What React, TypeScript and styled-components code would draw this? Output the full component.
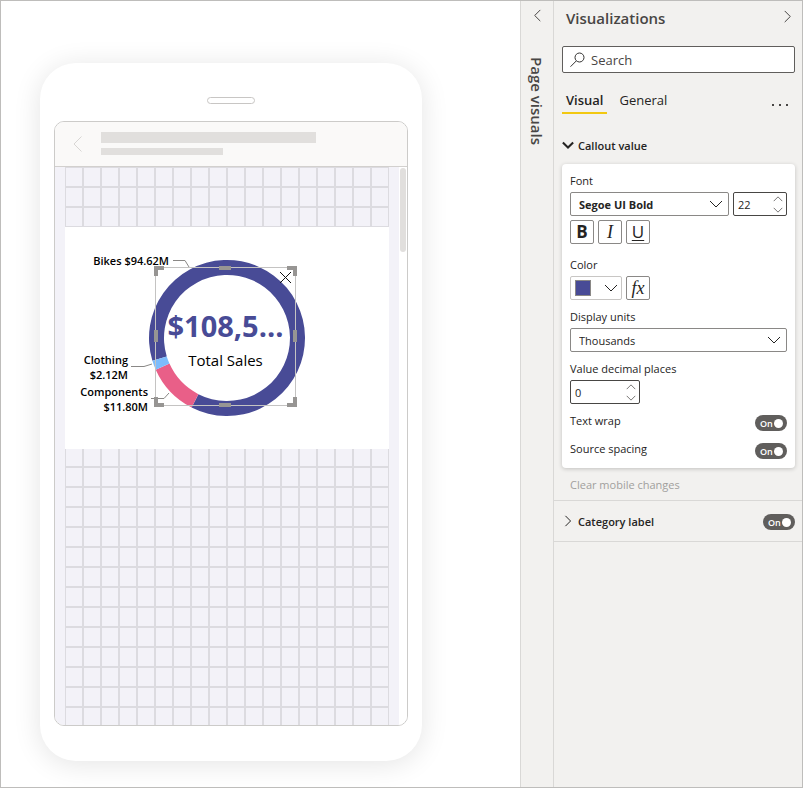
import React, { useId, useState } from "react";
import styled, { createGlobalStyle, css } from "styled-components";

const GlobalStyle = createGlobalStyle`
  *, *::before, *::after { box-sizing: border-box; }
  body { margin: 0; background: #fff; }
  body, button, input, select {
    font-family: "Open Sans", "Noto Sans", sans-serif;
    font-size: 11px;
    color: #252423;
  }
  button { padding: 0; border: 0; background: none; cursor: pointer; }
`;

const ink = "#252423";
const brand = "#484b96";
const line = "#d9d8d6";
const panelBg = "#f2f1ef";

/* ---------- Page ---------- */

const Page = styled.div`
  display: grid;
  grid-template-columns: minmax(420px, 1fr) 33px 249px;
  min-height: 100vh;
  border: 1px solid #bebdbb;
`;

const Canvas = styled.main`
  display: flex;
  flex-direction: column;
  padding: 62px 39px 26px;
  overflow: hidden;
`;

/* ---------- Phone ---------- */

const Phone = styled.section`
  flex: 1;
  display: flex;
  flex-direction: column;
  width: 100%;
  max-width: 382px;
  padding: 34px 14px 35px;
  border-radius: 36px;
  background: #fff;
  box-shadow: 0 3px 28px rgba(0, 0, 0, 0.11);
`;

const Speaker = styled.div`
  align-self: center;
  width: 48px;
  height: 7px;
  margin-bottom: 17px;
  border: 1px solid #c8c6c4;
  border-radius: 4px;
`;

const Screen = styled.div`
  flex: 1;
  display: flex;
  flex-direction: column;
  border: 1px solid #cccbc9;
  border-radius: 10px;
  overflow: hidden;
`;

const AppBar = styled.div`
  display: flex;
  align-items: flex-start;
  height: 45px;
  padding: 10px 18px;
  gap: 19px;
  background: #faf9f8;
  border-bottom: 1px solid #d2d0ce;
`;

const BackIcon = styled.svg`
  width: 9px;
  height: 16px;
  margin-top: 4px;
`;

const TitleBars = styled.div`
  display: flex;
  flex-direction: column;
  gap: 5px;
`;

const Bar = styled.div<{ $w: number; $h: number }>`
  width: ${(p) => p.$w}px;
  height: ${(p) => p.$h}px;
  background: #e1dfdd;
`;

const ScreenBody = styled.div`
  flex: 1;
  display: flex;
`;

const GridArea = styled.div`
  flex: 1;
  padding: 0 10px;
  background: #f3f2f8;
`;

const SnapGrid = styled.div`
  height: 100%;
  padding-top: 60px;
  background-image:
    linear-gradient(to right, #dcdbe0 1px, transparent 1px 17px, #dcdbe0 17px),
    linear-gradient(to bottom, #dcdbe0 1px, transparent 1px 19px, #dcdbe0 19px);
  background-size: 18px 20px;
`;

const ScrollTrack = styled.div`
  width: 8px;
  padding: 1px;
  background: #fff;
`;

const ScrollThumb = styled.div`
  height: 84px;
  border-radius: 3px;
  background: #e1dfdd;
`;

/* ---------- Chart ---------- */

const ChartTile = styled.div`
  position: relative;
  height: 222px;
  background: #fff;
`;

const ChartSvg = styled.svg`
  display: block;
  width: 324px;
  height: 222px;
  font-size: 11px;
  font-weight: 600;
`;

const Callout = styled.div`
  position: absolute;
  left: 90px;
  top: 40px;
  width: 141px;
  height: 139px;
  padding-top: 38px;
  border: 1px solid #c4c3c2;
  text-align: center;
  white-space: nowrap;
`;

const CalloutValue = styled.div`
  color: ${brand};
  font-size: 29px;
  font-weight: 700;
  line-height: 40px;
`;

const CalloutLabel = styled.div`
  color: #000;
  font-size: 15px;
  font-weight: 500;
  line-height: 28px;
`;

const HandleLayer = styled.svg`
  position: absolute;
  inset: -2px;
  width: 143px;
  height: 141px;
`;

const RemoveButton = styled.button`
  position: absolute;
  top: 3px;
  right: 3px;
  width: 13px;
  height: 13px;
  svg { display: block; }
`;

const CX = 162;
const CY = 111;
const point = (deg: number, r: number) => {
  const a = (deg * Math.PI) / 180;
  return `${(CX + r * Math.sin(a)).toFixed(2)} ${(CY - r * Math.cos(a)).toFixed(2)}`;
};
const ring = (from: number, to: number, outer = 78, inner = 63) => {
  const large = to - from > 180 ? 1 : 0;
  return `M${point(from, outer)} A${outer} ${outer} 0 ${large} 1 ${point(to, outer)} L${point(to, inner)} A${inner} ${inner} 0 ${large} 0 ${point(from, inner)} Z`;
};

const slices = [
  { name: "Bikes", from: 253, to: 567, color: brand },
  { name: "Components", from: 207, to: 246, color: "#e95f88" },
  { name: "Clothing", from: 246, to: 253, color: "#7dbcfc" },
];

function DonutChart() {
  return (
    <ChartSvg viewBox="0 0 324 222" role="img" aria-label="Total sales by category">
      {slices.map((s) => (
        <path key={s.name} d={ring(s.from, s.to)} fill={s.color} />
      ))}
      <g fill="none" stroke="#8a8886">
        <path d="M108 33.500H120L124 40" />
        <path d="M66 139.500H79L87 137" />
        <path d="M86 171.500H99L104 166" />
      </g>
      <g textAnchor="end" fill="#000">
        <text x="104" y="38">Bikes $94.62M</text>
        <text x="63" y="137">Clothing</text>
        <text x="63" y="152">$2.12M</text>
        <text x="83" y="169">Components</text>
        <text x="83" y="184">$11.80M</text>
      </g>
    </ChartSvg>
  );
}

function SelectedCallout() {
  return (
    <Callout>
      <CalloutValue>$108,5...</CalloutValue>
      <CalloutLabel>Total Sales</CalloutLabel>
      <HandleLayer viewBox="0 0 143 141" fill="#979593" aria-hidden>
        <path d="M0 0h10v4H4v6H0z" />
        <path d="M143 0h-10v4h6v6h4z" />
        <path d="M0 141h10v-4H4v-6H0z" />
        <path d="M143 141h-10v-4h6v-6h4z" />
        <path d="M65 0h12v4H65zM65 137h12v4H65zM0 64h4v12H0zM139 64h4v12h-4z" />
      </HandleLayer>
      <RemoveButton type="button" aria-label="Remove visual">
        <svg width="13" height="13" viewBox="0 0 13 13" stroke="#111" fill="none">
          <path d="M1 1l11 11M12 1L1 12" />
        </svg>
      </RemoveButton>
    </Callout>
  );
}

/* ---------- Collapsed rail ---------- */

const Rail = styled.aside`
  display: flex;
  flex-direction: column;
  align-items: center;
  border-left: 1px solid ${line};
  background: ${panelBg};
`;

const RailButton = styled.button`
  width: 24px;
  height: 32px;
`;

const RailTitle = styled.h2`
  margin: 24px 0 0;
  font-size: 15px;
  font-weight: 600;
  line-height: 24px;
  writing-mode: vertical-rl;
  color: #484644;
`;

/* ---------- Visualizations pane ---------- */

const Pane = styled.aside`
  border-left: 1px solid ${line};
  background: ${panelBg};
`;

const PaneSection = styled.section`
  padding: 0 7px 0 8px;
`;

const PaneHeader = styled.header`
  display: flex;
  align-items: center;
  justify-content: space-between;
  height: 33px;
  padding: 0 1px 0 4px;
`;

const PaneTitle = styled.h2`
  margin: 0;
  font-size: 15px;
  font-weight: 600;
  color: #484644;
`;

const SearchBox = styled.label`
  display: flex;
  align-items: center;
  gap: 6px;
  height: 27px;
  margin-top: 12px;
  padding: 0 7px;
  border: 1px solid #605e5c;
  border-radius: 2px;
  background: #fff;
`;

const SearchInput = styled.input`
  flex: 1;
  min-width: 0;
  padding: 0;
  border: 0;
  outline: 0;
  background: none;
  font-size: 13px;
  &::placeholder { color: #484644; opacity: 1; }
`;

const Tabs = styled.div`
  display: flex;
  gap: 8px;
  height: 27px;
  margin: 14px 0 18px;
`;

const Tab = styled.button<{ $active?: boolean }>`
  padding: 0 4px;
  border-bottom: 2px solid ${(p) => (p.$active ? "#f2c811" : "transparent")};
  font-size: 13px;
  font-weight: ${(p) => (p.$active ? 600 : 400)};
`;

const MoreButton = styled.button`
  display: flex;
  align-items: flex-end;
  justify-content: center;
  width: 24px;
  margin-left: auto;
  padding-right: 1px;
  padding-bottom: 8px;
  margin-right: 3px;
`;

const SectionToggle = styled.button`
  display: flex;
  align-items: center;
  gap: 4px;
  height: 26px;
  font-weight: 600;
`;

const Card = styled.div`
  display: flex;
  flex-direction: column;
  gap: 8px;
  margin-top: 6px;
  padding: 8px;
  border-radius: 4px;
  background: #fff;
  box-shadow: 0 1px 4px rgba(0, 0, 0, 0.2);
`;

const FontGroup = styled.div`
  display: flex;
  flex-direction: column;
  gap: 4px;
  margin-bottom: 4px;
`;

const Field = styled.div`
  display: flex;
  flex-direction: column;
  gap: 2px;
`;

const Label = styled.label`
  line-height: 18px;
`;

const Controls = styled.div`
  display: flex;
  flex-wrap: wrap;
  gap: 4px;
`;

const controlFrame = css`
  height: 24px;
  border: 1px solid #8a8886;
  border-radius: 2px;
  background: #fff;
`;

const SelectFrame = styled.div`
  ${controlFrame}
  flex: 1;
  display: grid;
  grid-template-columns: 1fr 25px;
  align-items: center;
  > * { grid-row: 1; }
  > svg { grid-column: 2; justify-self: center; pointer-events: none; z-index: 1; }
`;

const Select = styled.select<{ $bold?: boolean }>`
  grid-column: 1 / -1;
  height: 22px;
  padding: 0 8px;
  border: 0;
  outline: 0;
  background: none;
  appearance: none;
  font-weight: ${(p) => (p.$bold ? 700 : 400)};
`;

const NumberFrame = styled.div<{ $w: number }>`
  ${controlFrame}
  display: flex;
  width: ${(p) => p.$w}px;
  border-color: #484644;
`;

const NumberInput = styled.input`
  flex: 1;
  min-width: 0;
  padding: 0 0 0 4px;
  border: 0;
  outline: 0;
  background: none;
  appearance: textfield;
  &::-webkit-inner-spin-button { display: none; }
`;

const Stepper = styled.div`
  display: flex;
  flex-direction: column;
  width: 16px;
  button { flex: 1; display: flex; align-items: center; justify-content: center; }
`;

const SquareButton = styled.button`
  ${controlFrame}
  display: flex;
  align-items: center;
  justify-content: center;
  width: 24px;
  font-size: 17px;
  line-height: 20px;
`;

const BoldGlyph = styled.b`
  font-weight: 700;
`;

const ItalicGlyph = styled.i`
  font-family: "Liberation Serif", serif;
  font-size: 18px;
`;

const UnderlineGlyph = styled.u`
  text-underline-offset: 2px;
`;

const ColorButton = styled.button`
  ${controlFrame}
  display: flex;
  align-items: center;
  justify-content: space-between;
  width: 52px;
  padding: 0 3px 0 4px;
  border-color: #c8c6c4;
`;

const Swatch = styled.span`
  width: 16px;
  height: 16px;
  border: 1px solid #8a8886;
  background: ${brand};
`;

const SwitchRow = styled.div`
  display: flex;
  justify-content: space-between;
  height: 20px;
`;

const SwitchBox = styled.label`
  position: relative;
  display: flex;
  align-items: center;
  justify-content: space-between;
  width: 32px;
  height: 16px;
  margin-top: 3px;
  padding: 0 4px 0 5px;
  border-radius: 8px;
  background: #605e5c;
  color: #fff;
  font-size: 9px;
  font-weight: 600;
  cursor: pointer;
`;

const SwitchInput = styled.input`
  position: absolute;
  inset: 0;
  margin: 0;
  opacity: 0;
`;

const Knob = styled.span`
  width: 9px;
  height: 9px;
  border-radius: 50%;
  background: #fff;
`;

const ClearButton = styled.button`
  display: block;
  height: 32px;
  padding: 0 8px;
  color: #a19f9d;
`;

const SectionRow = styled.div`
  display: flex;
  align-items: center;
  justify-content: space-between;
  padding: 0 7px 0 8px;
  height: 42px;
  border-top: 1px solid ${line};
  border-bottom: 1px solid ${line};
  ${SwitchBox} { margin-top: 2px; }
`;

const turns = { down: 0, left: 90, up: 180, right: 270 };

function Chevron({ dir, size = 14, color = ink, width = 1 }: {
  dir: keyof typeof turns;
  size?: number;
  color?: string;
  width?: number;
}) {
  return (
    <svg width={size} height={size} viewBox="0 0 14 14" fill="none" stroke={color} aria-hidden>
      <path
        d="M1 4l6 6 6-6"
        transform={`rotate(${turns[dir]} 7 7)`}
        strokeWidth={(width * 14) / size}
      />
    </svg>
  );
}

function NumberField({ id, label, initial, w }: { id: string; label?: string; initial: number; w: number }) {
  const [value, setValue] = useState(initial);
  return (
    <NumberFrame $w={w}>
      <NumberInput
        id={id}
        type="number"
        aria-label={label}
        value={value}
        onChange={(e) => setValue(Number(e.target.value))}
      />
      <Stepper>
        <button type="button" aria-label="Increase" onClick={() => setValue(value + 1)}>
          <Chevron dir="up" size={10} color="#797775" />
        </button>
        <button type="button" aria-label="Decrease" onClick={() => setValue(value - 1)}>
          <Chevron dir="down" size={10} color="#797775" />
        </button>
      </Stepper>
    </NumberFrame>
  );
}

function Switch({ id, label }: { id: string; label?: string }) {
  const [on, setOn] = useState(true);
  return (
    <SwitchBox>
      <SwitchInput
        id={id}
        type="checkbox"
        role="switch"
        aria-label={label}
        checked={on}
        onChange={(e) => setOn(e.target.checked)}
      />
      {on ? "On" : "Off"}
      <Knob />
    </SwitchBox>
  );
}

export default function App() {
  const uid = useId();
  const id = (name: string) => `${uid}-${name}`;
  return (
    <>
      <GlobalStyle />
      <Page>
        <Canvas>
          <Phone aria-label="Mobile layout">
            <Speaker />
            <Screen>
              <AppBar>
                <BackIcon viewBox="0 0 9 16" fill="none" stroke="#d8d6d4">
                  <path d="M8.500 0.500L1 8l7.500 7.500" />
                </BackIcon>
                <TitleBars>
                  <Bar $w={215} $h={11} />
                  <Bar $w={122} $h={7} />
                </TitleBars>
              </AppBar>
              <ScreenBody>
                <GridArea>
                  <SnapGrid>
                    <ChartTile>
                      <DonutChart />
                      <SelectedCallout />
                    </ChartTile>
                  </SnapGrid>
                </GridArea>
                <ScrollTrack>
                  <ScrollThumb />
                </ScrollTrack>
              </ScreenBody>
            </Screen>
          </Phone>
        </Canvas>

        <Rail>
          <RailButton type="button" aria-label="Expand page visuals">
            <Chevron dir="left" size={13} color="#484644" />
          </RailButton>
          <RailTitle>Page visuals</RailTitle>
        </Rail>

        <Pane>
          <PaneSection>
            <PaneHeader>
              <PaneTitle>Visualizations</PaneTitle>
              <button type="button" aria-label="Collapse visualizations">
                <Chevron dir="right" size={13} color="#484644" />
              </button>
            </PaneHeader>
            <SearchBox>
              <svg width="15" height="16" viewBox="0 0 15 16" fill="none" stroke="#323130" aria-hidden>
                <circle cx="9.500" cy="5.500" r="4.500" />
                <path d="M6.200 9L0.500 14.700" />
              </svg>
              <SearchInput type="search" placeholder="Search" aria-label="Search" />
            </SearchBox>
            <Tabs role="tablist">
              <Tab type="button" role="tab" aria-selected $active>Visual</Tab>
              <Tab type="button" role="tab" aria-selected={false}>General</Tab>
              <MoreButton type="button" aria-label="More options">
                <svg width="16" height="2" viewBox="0 0 16 2" fill="#484644">
                  <path d="M0 0h2v2H0zM7 0h2v2H7zM14 0h2v2h-2z" />
                </svg>
              </MoreButton>
            </Tabs>
          </PaneSection>

          <PaneSection>
            <SectionToggle type="button" aria-expanded>
              <Chevron dir="down" size={12} width={2} />
              Callout value
            </SectionToggle>
            <Card>
              <FontGroup>
                <Field>
                  <Label htmlFor={id("font")}>Font</Label>
                  <Controls>
                    <SelectFrame>
                      <Select id={id("font")} $bold defaultValue="Segoe UI Bold">
                        <option>Segoe UI Bold</option>
                        <option>Segoe UI</option>
                      </Select>
                      <Chevron dir="down" />
                    </SelectFrame>
                    <NumberField id={id("size")} label="Font size" initial={22} w={54} />
                  </Controls>
                </Field>
                <Controls>
                  <SquareButton type="button" aria-label="Bold"><BoldGlyph>B</BoldGlyph></SquareButton>
                  <SquareButton type="button" aria-label="Italic"><ItalicGlyph>I</ItalicGlyph></SquareButton>
                  <SquareButton type="button" aria-label="Underline"><UnderlineGlyph>U</UnderlineGlyph></SquareButton>
                </Controls>
              </FontGroup>
              <Field>
                <Label htmlFor={id("color")}>Color</Label>
                <Controls>
                  <ColorButton id={id("color")} type="button">
                    <Swatch />
                    <Chevron dir="down" />
                  </ColorButton>
                  <SquareButton type="button" aria-label="Conditional formatting">
                    <ItalicGlyph>fx</ItalicGlyph>
                  </SquareButton>
                </Controls>
              </Field>
              <Field>
                <Label htmlFor={id("units")}>Display units</Label>
                <Controls>
                  <SelectFrame>
                    <Select id={id("units")} defaultValue="Thousands">
                      <option>Auto</option>
                      <option>Thousands</option>
                      <option>Millions</option>
                    </Select>
                    <Chevron dir="down" />
                  </SelectFrame>
                </Controls>
              </Field>
              <Field>
                <Label htmlFor={id("places")}>Value decimal places</Label>
                <NumberField id={id("places")} initial={0} w={70} />
              </Field>
              <SwitchRow>
                <Label htmlFor={id("wrap")}>Text wrap</Label>
                <Switch id={id("wrap")} />
              </SwitchRow>
              <SwitchRow>
                <Label htmlFor={id("spacing")}>Source spacing</Label>
                <Switch id={id("spacing")} />
              </SwitchRow>
            </Card>
            <ClearButton type="button">Clear mobile changes</ClearButton>
          </PaneSection>
          <SectionRow>
            <SectionToggle type="button" aria-expanded={false}>
              <Chevron dir="right" size={12} width={1} />
              Category label
            </SectionToggle>
            <Switch id={id("category")} label="Category label" />
          </SectionRow>
        </Pane>
      </Page>
    </>
  );
}
